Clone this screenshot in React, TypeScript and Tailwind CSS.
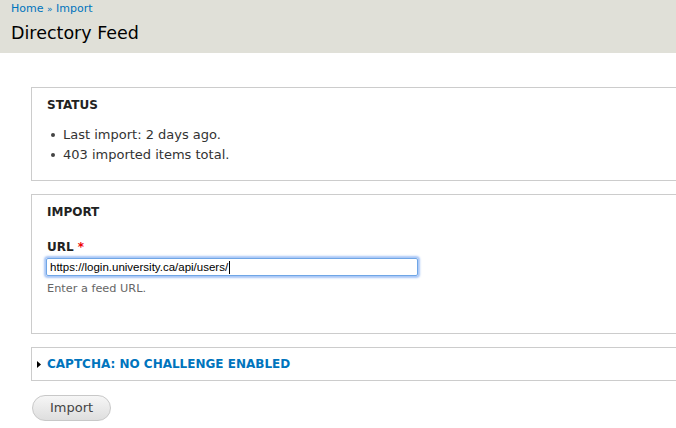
import React from "react";

const sans = { fontFamily: '"DejaVu Sans", Verdana, sans-serif' };

export default function App() {
  return (
    <div className="w-[676px] h-[428px] overflow-hidden bg-white text-[#333]" style={sans}>
      <div className="h-[53px] bg-[#e0e0d8] px-[11px] pt-[2px]">
        <div className="text-[11px] leading-[14px] text-[#0074bd]">
          Home <span className="text-[9px]">»</span> Import
        </div>
        <h1 className="mt-[6px] text-[17.5px] leading-[22px] text-black">Directory Feed</h1>
      </div>
      <div className="pl-[31px] pt-[34px]">
        <div className="border border-r-0 border-[#ccc] h-[94px] pl-[15px] pt-[10px]">
          <div className="text-[12px] font-bold uppercase leading-[14px] text-[#222]">Status</div>
          <ul className="mt-[13px] text-[13px] leading-[20px] text-[#333]">
            <li className="flex items-center">
              <span className="ml-[4px] mr-[8px] h-[4px] w-[4px] rounded-full bg-[#444]" />
              Last import: 2 days ago.
            </li>
            <li className="flex items-center">
              <span className="ml-[4px] mr-[8px] h-[4px] w-[4px] rounded-full bg-[#444]" />
              403 imported items total.
            </li>
          </ul>
        </div>
        <div className="mt-[13px] border border-r-0 border-[#ccc] h-[140px] pl-[15px] pt-[10px]">
          <div className="text-[12px] font-bold uppercase leading-[14px] text-[#222]">Import</div>
          <div className="mt-[21px] text-[12px] font-bold leading-[14px] text-[#222]">
            URL <span className="text-[#e00]">*</span>
          </div>
          <div className="mt-[4px] -ml-[1px] flex h-[18px] w-[372px] items-center rounded-[2px] border border-[#6fa6e6] pl-[3px] shadow-[0_0_2px_2px_rgba(110,160,240,0.6)]">
            <span className="text-[11.5px] leading-[14px] text-black" style={{ fontFamily: '"Liberation Sans", Arial, sans-serif' }}>
              https://login.university.ca/api/users/
            </span>
            <span className="ml-[1px] h-[13px] w-[1px] bg-black" />
          </div>
          <div className="mt-[6px] text-[11.3px] leading-[14px] text-[#666]">Enter a feed URL.</div>
        </div>
        <div className="mt-[13px] flex h-[34px] items-center border border-r-0 border-[#ccc] pl-[5px]">
          <svg width="4" height="7" viewBox="0 0 4 7" className="mr-[6px]">
            <path d="M0 0 L4 3.5 L0 7 Z" fill="#000" />
          </svg>
          <span className="text-[12px] font-bold uppercase text-[#0074bd]">Captcha: No challenge enabled</span>
        </div>
        <button className="mt-[14px] ml-[1px] h-[26px] w-[79px] rounded-full border border-[#c8c8c8] bg-gradient-to-b from-[#f6f6f6] to-[#dedede] text-[13px] text-[#444]">
          Import
        </button>
      </div>
    </div>
  );
}
